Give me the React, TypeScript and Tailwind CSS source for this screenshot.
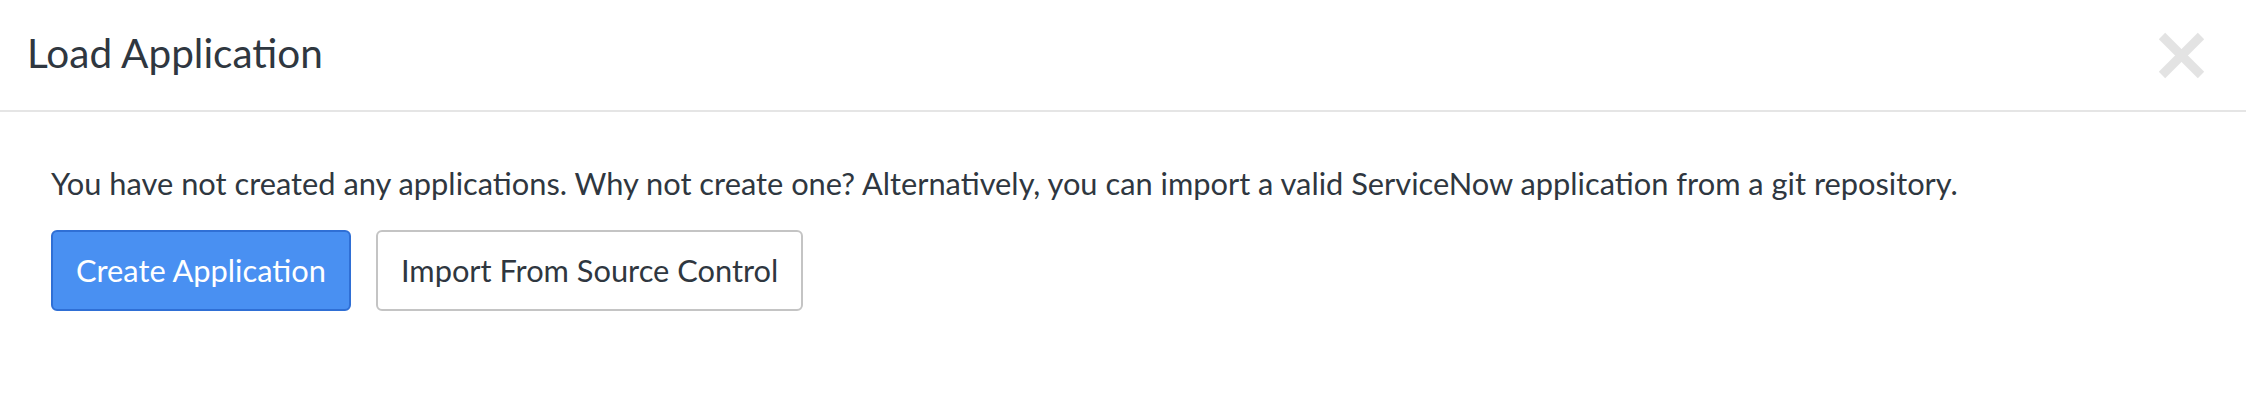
export default function App() {
  return (
    <div
      className="w-[2246px] h-[410px] bg-white text-[#2f3740] overflow-hidden"
      style={{ fontFamily: "Lato, 'Open Sans', sans-serif" }}
    >
      {/* Header */}
      <div className="flex h-[112px] items-start justify-between border-b-2 border-[#e5e5e5] pl-[27px] pr-[41px]">
        <h4 className="pt-[28px] text-[40.5px] leading-[49px] font-normal">Load Application</h4>
        <button className="mt-[32px] h-[47px] w-[47px] text-[#e3e3e3]" aria-label="Close">
          <svg viewBox="0 0 47 47" className="h-[47px] w-[47px]">
            <path d="M4 4 L43 43 M43 4 L4 43" stroke="currentColor" strokeWidth="9" fill="none" />
          </svg>
        </button>
      </div>

      {/* Body */}
      <div className="pl-[51px] pt-[52px]">
        <p className="text-[30.8px] leading-[40px]">
          You have not created any applications. Why not create one? Alternatively, you can import a valid
          ServiceNow application from a git repository.
        </p>
        <div className="mt-[26px] flex gap-[25px]">
          <button className="h-[81px] rounded-[6px] border-2 border-[#2f6fd5] bg-[#4990f2] px-[23px] text-[30.8px] leading-[37px] text-white">
            Create Application
          </button>
          <button className="h-[81px] rounded-[6px] border-2 border-[#c4c4c4] bg-white px-[23px] text-[30.8px] leading-[37px] text-[#2f3740]">
            Import From Source Control
          </button>
        </div>
      </div>
    </div>
  );
}
